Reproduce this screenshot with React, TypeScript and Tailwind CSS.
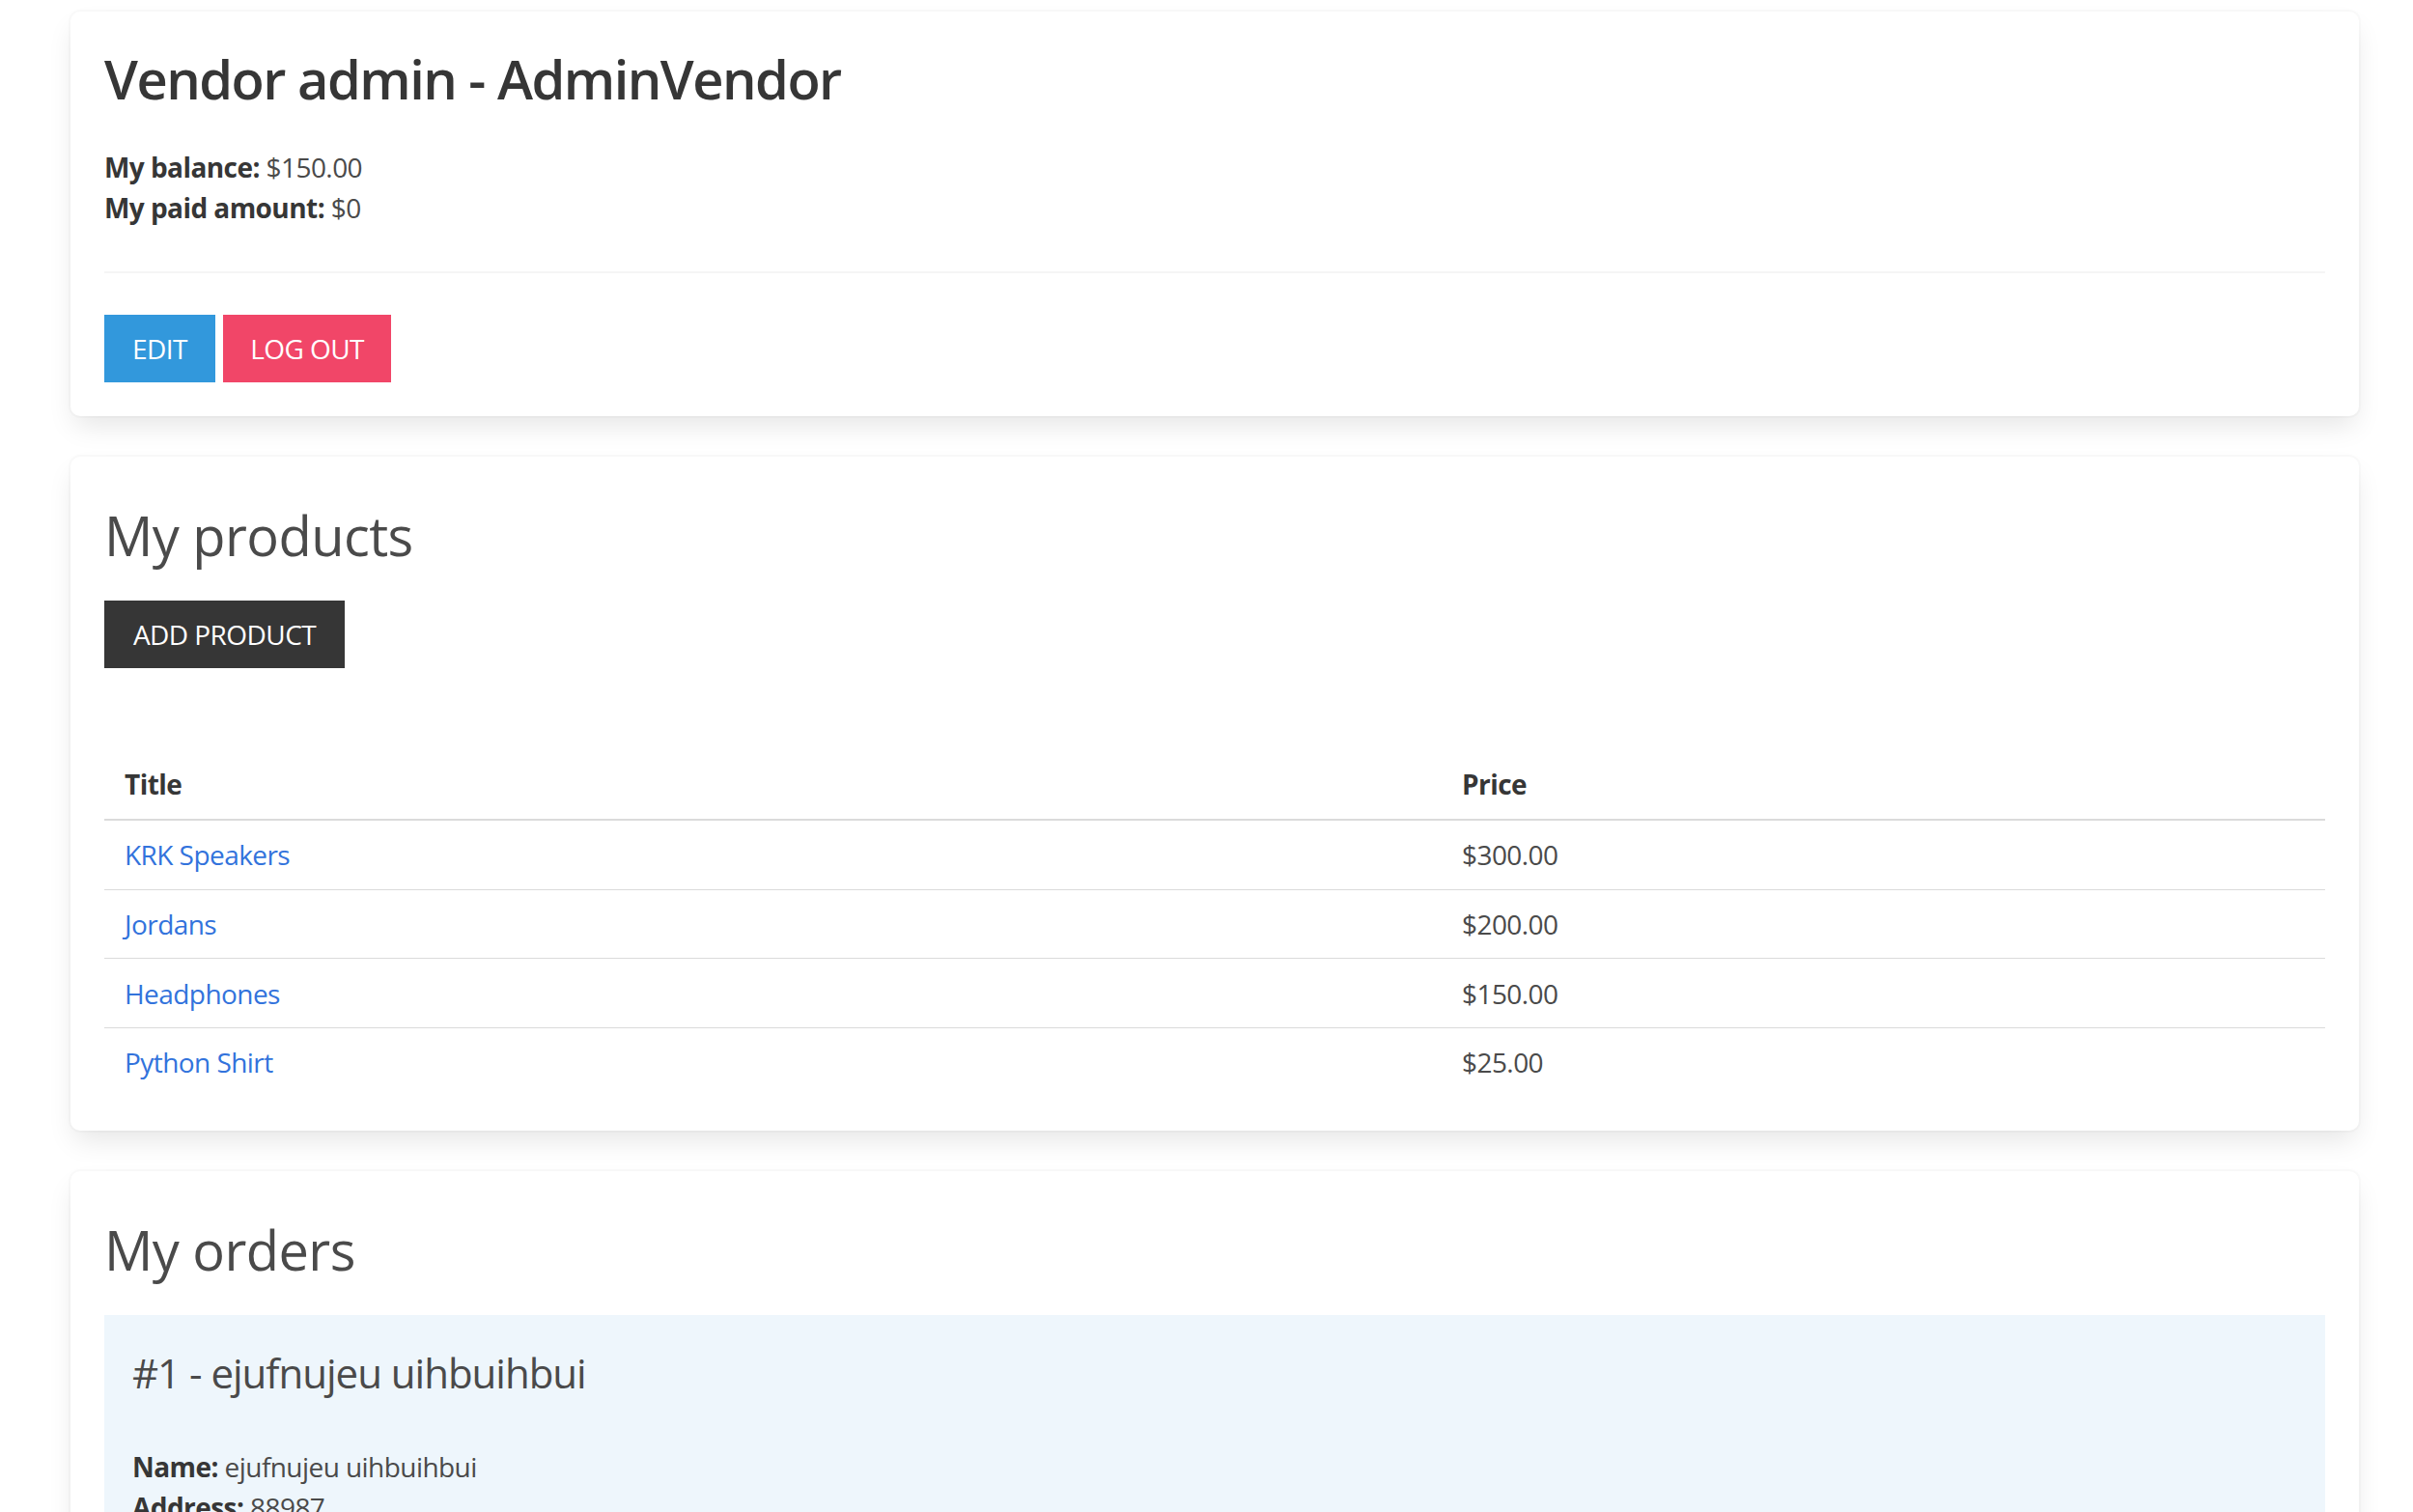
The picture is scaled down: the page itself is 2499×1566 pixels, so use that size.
type Product = {
  id: number;
  title: string;
  price: string;
};

const products: Product[] = [
  { id: 1, title: "KRK Speakers", price: "$300.00" },
  { id: 2, title: "Jordans", price: "$200.00" },
  { id: 3, title: "Headphones", price: "$150.00" },
  { id: 4, title: "Python Shirt", price: "$25.00" },
];

const card =
  "bg-white rounded-[10px] p-[35px] shadow-[0_14px_28px_-4px_rgba(10,10,10,0.1),0_0_0_2px_rgba(10,10,10,0.02)]";

export default function App() {
  return (
    <div
      className="min-h-screen bg-white text-[28px] leading-[42px] tracking-[-0.02em] text-[#4a4a4a]"
      style={{ fontFamily: '"Open Sans", "Noto Sans", sans-serif' }}
    >
      <div className="ml-[73px] w-[2370px] pt-[12px]">
        {/* account */}
        <div className={`${card} mb-[42px]`}>
          <h1 className="pt-[3px] text-[56px] leading-[63px] tracking-[-0.027em] font-semibold text-[#363636] mb-[39px]">
            Vendor admin - AdminVendor
          </h1>
          <p>
            <strong className="font-bold text-[#363636]">My balance:</strong> $150.00
            <br />
            <strong className="font-bold text-[#363636]">My paid amount:</strong> $0
          </p>
          <hr className="mt-[45px] mb-[43px] h-[2px] border-0 bg-[#f5f5f5]" />
          <div className="flex gap-[8px]">
            <button
              type="button"
              className="h-[70px] w-[115px] flex items-center justify-center bg-[#3298dc] text-white"
            >
              EDIT
            </button>
            <button
              type="button"
              className="h-[70px] w-[174px] flex items-center justify-center bg-[#f14668] text-white"
            >
              LOG OUT
            </button>
          </div>
        </div>

        {/* products */}
        <div className={`${card} mb-[42px]`}>
          <h2 className="pt-[4px] text-[56px] leading-[84px] font-normal text-[#4a4a4a] mb-[26px]">
            My products
          </h2>
          <button
            type="button"
            className="h-[70px] w-[249px] flex items-center justify-center bg-[#363636] text-white mb-[85px]"
          >
            ADD PRODUCT
          </button>
          <table className="w-full table-fixed border-collapse text-left">
            <colgroup>
              <col className="w-[1385px]" />
              <col />
            </colgroup>
            <thead>
              <tr className="border-b-2 border-[#dbdbdb]">
                <th className="px-[21px] py-[14.375px] font-bold text-[#363636]">Title</th>
                <th className="px-[21px] py-[14.375px] font-bold text-[#363636]">Price</th>
              </tr>
            </thead>
            <tbody>
              {products.map((p, i) => (
                <tr
                  key={p.id}
                  className={i < products.length - 1 ? "border-b border-[#dbdbdb]" : ""}
                >
                  <td className="px-[21px] py-[14.375px]">
                    <a href="#" className="text-[#3273dc]">
                      {p.title}
                    </a>
                  </td>
                  <td className="px-[21px] py-[14.375px] text-[#4a4a4a]">{p.price}</td>
                </tr>
              ))}
            </tbody>
          </table>
        </div>

        {/* orders */}
        <div className={`${card} mb-[42px]`}>
          <h2 className="pt-[4px] text-[56px] leading-[84px] font-normal text-[#4a4a4a] mb-[26px]">
            My orders
          </h2>
          <div className="bg-[#eef6fc] px-[29px] pt-[28px] pb-[120px]">
            <h3 className="text-[42px] leading-[63px] tracking-[-0.024em] font-normal text-[#4a4a4a] mb-[45px]">
              #1 - ejufnujeu uihbuihbui
            </h3>
            <p>
              <strong className="font-bold text-[#363636]">Name:</strong> ejufnujeu uihbuihbui
              <br />
              <strong className="font-bold text-[#363636]">Address:</strong> 88987
            </p>
          </div>
        </div>
      </div>
    </div>
  );
}
